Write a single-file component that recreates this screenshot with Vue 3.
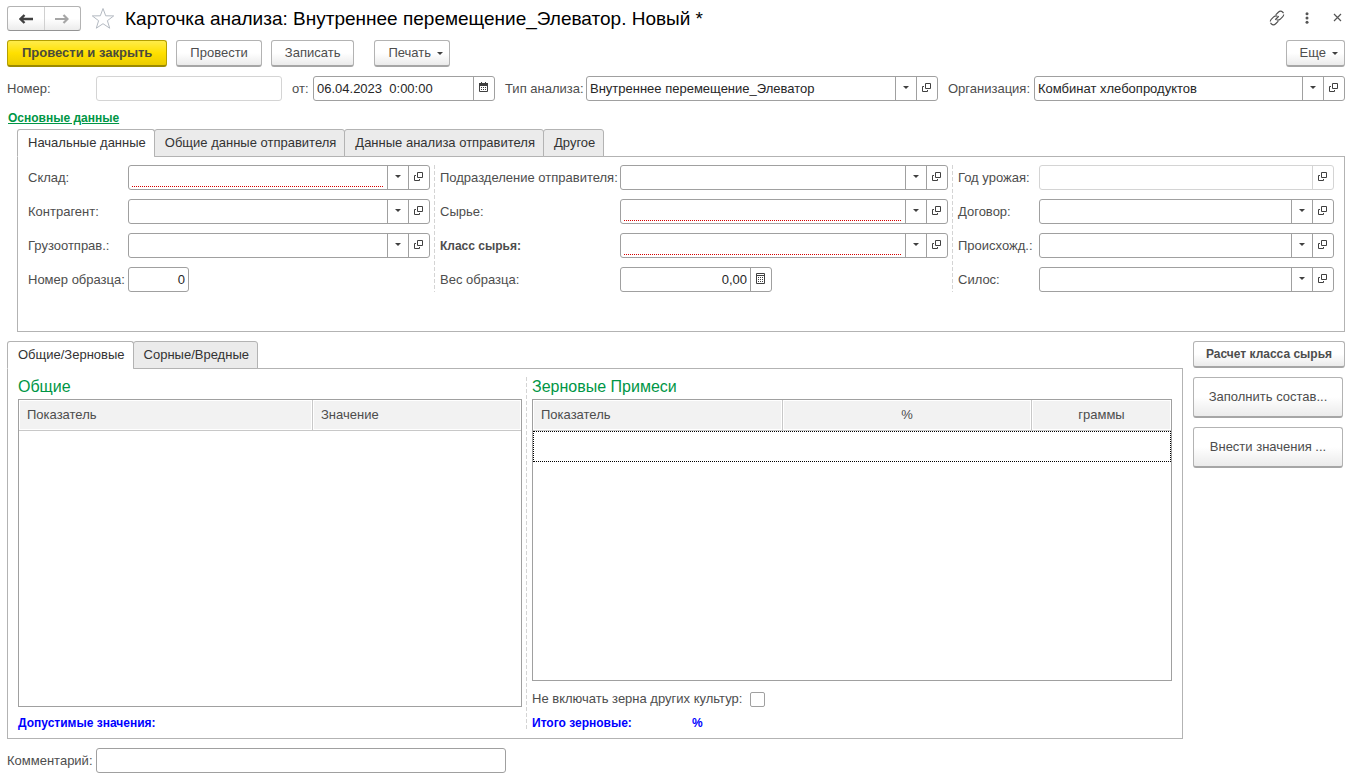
<script setup>
import { ref } from 'vue'

const topTabs = ['Начальные данные', 'Общие данные отправителя', 'Данные анализа отправителя', 'Другое']
const bottomTabs = ['Общие/Зерновые', 'Сорные/Вредные']
const topTab = ref(0)
const bottomTab = ref(0)

const header = ref([
  { id: 'number', label: 'Номер:', value: '', disabled: true, buttons: [] },
  { id: 'date', label: 'от:', value: '06.04.2023  0:00:00', buttons: ['calendar'] },
  { id: 'kind', label: 'Тип анализа:', value: 'Внутреннее перемещение_Элеватор', buttons: ['drop', 'open'] },
  { id: 'org', label: 'Организация:', value: 'Комбинат хлебопродуктов', buttons: ['drop', 'open'] }
])

const columns = ref([
  [
    { id: 'store', label: 'Склад:', value: '', required: true, buttons: ['drop', 'open'] },
    { id: 'partner', label: 'Контрагент:', value: '', buttons: ['drop', 'open'] },
    { id: 'shipper', label: 'Грузоотправ.:', value: '', buttons: ['drop', 'open'] },
    { id: 'sample', label: 'Номер образца:', value: '0', size: 'short', buttons: [] }
  ],
  [
    { id: 'unit', label: 'Подразделение отправителя:', value: '', buttons: ['drop', 'open'] },
    { id: 'raw', label: 'Сырье:', value: '', required: true, buttons: ['drop', 'open'] },
    { id: 'grade', label: 'Класс сырья:', value: '', bold: true, required: true, buttons: ['drop', 'open'] },
    { id: 'weight', label: 'Вес образца:', value: '0,00', size: 'medium', buttons: ['calc'] }
  ],
  [
    { id: 'year', label: 'Год урожая:', value: '', disabled: true, buttons: ['open'] },
    { id: 'contract', label: 'Договор:', value: '', buttons: ['drop', 'open'] },
    { id: 'origin', label: 'Происхожд.:', value: '', buttons: ['drop', 'open'] },
    { id: 'silo', label: 'Силос:', value: '', buttons: ['drop', 'open'] }
  ]
])

const buttonNames = { drop: 'Выбрать из списка', open: 'Открыть', calendar: 'Календарь', calc: 'Калькулятор' }
const excludeOther = ref(false)
const comment = ref('')
</script>

<template>
  <main class="page">
    <header class="titlebar">
      <div class="history">
        <button type="button" aria-label="Назад">
          <svg width="14" height="10" viewBox="0 0 14 10"><path d="M5.500 1 1.500 5l4 4M2 5h12" fill="none" stroke="#404040" stroke-width="2.400" /></svg>
        </button>
        <button type="button" aria-label="Вперед">
          <svg width="14" height="10" viewBox="0 0 14 10"><path d="m8.500 1 4 4-4 4M12 5H0" fill="none" stroke="#a6a6a6" stroke-width="2.200" /></svg>
        </button>
      </div>
      <button type="button" class="plain star" aria-label="В избранное">
        <svg width="24" height="23" viewBox="0 0 24 23"><path d="m12 1.500 2.700 7.300 8 .1-6.300 4.800 2.300 7.500-6.700-4.500-6.700 4.500 2.300-7.500L1.300 8.900l8-.1z" fill="#fff" stroke="#b4bac2" /></svg>
      </button>
      <h1>Карточка анализа: Внутреннее перемещение_Элеватор. Новый *</h1>
      <button type="button" class="plain tool" aria-label="Ссылка">
        <svg width="16" height="16" viewBox="0 0 18 18"><path d="m7.500 5.500 3-3a3.500 3.500 0 0 1 5 5l-3 3q-2 1.500-4 .5M10.500 12.500l-3 3a3.500 3.500 0 0 1-5-5l3-3q2-1.500 4-.5M7 11l4-4" fill="none" stroke="#505050" stroke-width="1.300" stroke-dasharray="11 1.500" /></svg>
      </button>
      <button type="button" class="plain tool" aria-label="Дополнительно">
        <svg width="4" height="12" viewBox="0 0 4 12" fill="#555"><circle cx="2" cy="1.700" r="1.500" /><circle cx="2" cy="6" r="1.500" /><circle cx="2" cy="10.300" r="1.500" /></svg>
      </button>
      <button type="button" class="plain tool" aria-label="Закрыть">
        <svg width="9" height="9" viewBox="0 0 9 9"><path d="m1 1 7 7M8 1 1 8" fill="none" stroke="#555" stroke-width="1.200" /></svg>
      </button>
    </header>

    <div class="commands">
      <button type="button" class="btn primary">Провести и закрыть</button>
      <button type="button" class="btn">Провести</button>
      <button type="button" class="btn">Записать</button>
      <button type="button" class="btn menu print">Печать<span class="caret"></span></button>
      <button type="button" class="btn menu more">Еще<span class="caret"></span></button>
    </div>

    <div class="requisites">
      <template v-for="f in header" :key="f.id">
        <label :for="f.id">{{ f.label }}</label>
        <div class="field" :class="{ disabled: f.disabled }">
          <input :id="f.id" v-model="f.value" type="text" :disabled="f.disabled">
          <button v-for="b in f.buttons" :key="b" type="button" :aria-label="buttonNames[b]">
            <span v-if="b === 'drop'" class="caret"></span>
            <svg v-else-if="b === 'open'" width="10" height="10" viewBox="0 0 10 10"><path d="M3.500.5h5v5h-5zM2 3.500H.5v5h5V7" fill="none" stroke="#404040" /></svg>
            <svg v-else width="10" height="11" viewBox="0 0 10 11"><path d="M.5 2.500h8v7h-8z" fill="#fff" stroke="#404040" /><path d="M0 1h9v3H0zM2 0h1v2H2zM6 0h1v2H6zM2 5h1v1H2zM4 5h1v1H4zM6 5h1v1H6zM2 7h1v1H2zM4 7h1v1H4zM6 7h1v1H6z" fill="#404040" /></svg>
          </button>
        </div>
      </template>
    </div>

    <a href="#main" class="section-link">Основные данные</a>

    <section id="main" class="upper">
      <div class="tabs" role="tablist">
        <button v-for="(t, i) in topTabs" :key="t" type="button" role="tab" :aria-selected="topTab === i" :class="{ active: topTab === i }" @click="topTab = i">{{ t }}</button>
      </div>
      <div class="panel initial">
        <div v-for="(col, c) in columns" :key="c" class="column" :class="'column-' + c">
          <template v-for="f in col" :key="f.id">
            <label :for="f.id" :class="{ strong: f.bold }">{{ f.label }}</label>
            <div class="field" :class="[f.size, { disabled: f.disabled, required: f.required }]">
              <input :id="f.id" v-model="f.value" type="text" :disabled="f.disabled">
              <button v-for="b in f.buttons" :key="b" type="button" :aria-label="buttonNames[b]">
                <span v-if="b === 'drop'" class="caret"></span>
                <svg v-else-if="b === 'open'" width="10" height="10" viewBox="0 0 10 10"><path d="M3.500.5h5v5h-5zM2 3.500H.5v5h5V7" fill="none" stroke="#404040" /></svg>
                <svg v-else width="10" height="11" viewBox="0 0 10 11"><path d="M.5.5h8v10h-8zM0 2.500h9" fill="none" stroke="#404040" /><path d="M2 4h1v1H2zM4 4h1v1H4zM6 4h1v1H6zM2 6h1v1H2zM4 6h1v1H4zM6 6h1v1H6zM2 8h1v1H2zM4 8h1v1H4zM6 8h1v1H6z" fill="#404040" /></svg>
              </button>
            </div>
          </template>
        </div>
      </div>
    </section>

    <div class="lower">
      <section class="results">
        <div class="tabs" role="tablist">
          <button v-for="(t, i) in bottomTabs" :key="t" type="button" role="tab" :aria-selected="bottomTab === i" :class="{ active: bottomTab === i }" @click="bottomTab = i">{{ t }}</button>
        </div>
        <div class="panel grids">
          <div class="general">
            <h2>Общие</h2>
            <div class="table-box">
              <table>
                <colgroup><col class="w-name"><col></colgroup>
                <thead><tr><th>Показатель</th><th>Значение</th></tr></thead>
              </table>
            </div>
            <p class="total">Допустимые значения:</p>
          </div>
          <div class="grain">
            <h2>Зерновые Примеси</h2>
            <div class="table-box">
              <table>
                <colgroup><col class="w-grain"><col class="w-percent"><col></colgroup>
                <thead><tr><th>Показатель</th><th class="mid">%</th><th class="mid">граммы</th></tr></thead>
                <tbody><tr class="current"><td></td><td></td><td></td></tr></tbody>
              </table>
            </div>
            <div class="check">
              <label for="exclude">Не включать зерна других культур:</label>
              <input id="exclude" v-model="excludeOther" type="checkbox">
            </div>
            <p class="total"><span class="total-name">Итого зерновые:</span><span>%</span></p>
          </div>
        </div>
      </section>
      <aside class="actions">
        <button type="button" class="btn small">Расчет класса сырья</button>
        <button type="button" class="btn tall">Заполнить состав...</button>
        <button type="button" class="btn tall">Внести значения ...</button>
      </aside>
    </div>

    <div class="comment">
      <label for="comment">Комментарий:</label>
      <div class="field"><input id="comment" v-model="comment" type="text"></div>
    </div>
  </main>
</template>

<style>
body {
  margin: 0;
  background: #fff;
}
</style>

<style scoped>
* {
  box-sizing: border-box;
}
.page {
  display: flex;
  flex-direction: column;
  min-height: 100vh;
  padding: 6px 10px 6px 7px;
  color: #4d4d4d;
  font-family: "Liberation Sans", Arial, sans-serif;
  font-size: 13px;
  line-height: 16px;
}
button,
input {
  margin: 0;
  font: inherit;
  color: inherit;
}
button {
  padding: 0;
  border: 0;
  background: none;
}
h1,
h2,
p {
  margin: 0;
}
svg {
  display: block;
}

.titlebar {
  display: flex;
  align-items: center;
  height: 25px;
}
.history {
  display: flex;
  width: 74px;
  height: 25px;
  border: 1px solid #b3b3b3;
  border-bottom-color: #949494;
  border-radius: 3px;
  background: linear-gradient(#fff 50%, #ececec);
}
.history button {
  display: flex;
  flex: 1;
  align-items: center;
  justify-content: center;
}
.history button + button {
  border-left: 1px solid #d0d0d0;
}
.star {
  margin: 0 10px;
}
h1 {
  flex: 1;
  color: #000;
  font-size: 19px;
  font-weight: normal;
  line-height: 24px;
  white-space: nowrap;
}
.plain {
  display: flex;
  align-items: center;
  justify-content: center;
}
.tool {
  width: 30px;
  height: 25px;
  padding-bottom: 2px;
}
.tool:last-child {
  width: 16px;
  margin: 0 0 0 7px;
}

.commands {
  display: flex;
  margin-top: 9px;
  gap: 9px;
}
.btn {
  height: 27px;
  padding: 0 13px;
  border: 1px solid #b3b3b3;
  border-bottom: 2px solid #a6a6a6;
  border-radius: 3px;
  background: linear-gradient(#fff 50%, #ebebeb);
  color: #4d4d4d;
  white-space: nowrap;
}
.primary {
  padding: 0 14px;
  border-color: #b5a000;
  border-bottom-color: #9c8a00;
  background: linear-gradient(#ffec4a, #ffe000 50%, #ebcc00);
  color: #4a4a3c;
  font-weight: bold;
}
.menu {
  display: flex;
  align-items: center;
  gap: 6px;
  padding-right: 6px;
}
.print {
  margin-left: 11px;
}
.more {
  margin-left: auto;
}
.caret {
  width: 0;
  border: 3px solid transparent;
  border-top-color: #404040;
  border-bottom: 0;
}

.requisites {
  display: grid;
  grid-template-columns: 89px 186px 31px 182px 91px minmax(0, 352fr) 96px minmax(0, 311fr);
  align-items: center;
  margin-top: 9px;
}
.requisites label {
  padding-left: 10px;
}
.requisites label:first-child {
  padding-left: 0;
}
label {
  white-space: nowrap;
}
.field {
  display: flex;
  height: 25px;
  overflow: hidden;
  border: 1px solid #a0a0a0;
  border-radius: 3px;
  background: #fff;
}
.field input {
  flex: 1;
  min-width: 0;
  padding: 0 3px;
  border: 0;
  outline: 0;
  background: none;
  color: #262626;
}
.field button {
  display: flex;
  flex: none;
  align-items: center;
  justify-content: center;
  width: 21px;
  padding-bottom: 2px;
  border-left: 1px solid #a0a0a0;
}
.field.disabled,
.field.disabled button {
  border-color: #d4d4d4;
}
.field.required input {
  background-image: linear-gradient(90deg, #d40000 50%, #ffffff 50%);
  background-repeat: repeat-x;
  background-position: 0 20px;
  background-size: 2px 1px;
  background-origin: content-box;
  background-clip: content-box;
}
.short {
  width: 61px;
}
.medium {
  width: 152px;
}
.short input,
.medium input {
  text-align: right;
}

.section-link {
  align-self: flex-start;
  margin: 9px 0 3px 1px;
  color: #009646;
  font-size: 12px;
  font-weight: bold;
}

.upper {
  padding-left: 10px;
}
.tabs {
  position: relative;
  display: flex;
  margin-bottom: -1px;
}
.tabs button {
  height: 28px;
  margin-right: -1px;
  padding: 0 8px 0 10px;
  border: 1px solid #b3b3b3;
  border-radius: 3px 3px 0 0;
  background: #ebebeb;
  color: #333;
  white-space: nowrap;
}
.tabs button.active {
  border-bottom-color: #fff;
  background: #fff;
}
.panel {
  border: 1px solid #b3b3b3;
}
.initial {
  display: grid;
  grid-template-columns: minmax(0, 402fr) minmax(0, 514fr) minmax(0, 382fr);
  align-items: start;
  gap: 4px;
  min-height: 176px;
  padding: 8px 10px;
}
.column {
  display: grid;
  grid-template-columns: 100px minmax(0, 1fr);
  align-items: center;
  row-gap: 9px;
}
.column-1,
.column-2,
.grain {
  padding-left: 6px;
  background: repeating-linear-gradient(#d4d4d4 0 4px, #fff 4px 6px) 0 0 / 1px 100% no-repeat;
}
.column-1 {
  grid-template-columns: 180px minmax(0, 1fr);
}
.column-2 {
  grid-template-columns: 81px minmax(0, 1fr);
}
.strong {
  font-size: 12px;
  font-weight: bold;
}

.lower {
  display: flex;
  flex: 1;
  gap: 10px;
  margin-top: 9px;
}
.results {
  display: flex;
  flex: 1;
  flex-direction: column;
}
.grids {
  display: grid;
  flex: 1;
  grid-template-columns: minmax(0, 504fr) minmax(0, 646fr);
  gap: 4px;
  padding: 8px 10px 7px;
}
.general,
.grain {
  display: flex;
  flex-direction: column;
}
h2 {
  height: 22px;
  color: #009646;
  font-size: 16px;
  font-weight: normal;
  line-height: 20px;
}
.table-box {
  flex: 1;
  border: 1px solid #a0a0a0;
}
table {
  width: 100%;
  border-collapse: separate;
  border-spacing: 0;
  table-layout: fixed;
}
th {
  height: 31px;
  padding: 0 8px;
  border-right: 1px solid #c8c8c8;
  border-bottom: 1px solid #c8c8c8;
  background: #f2f2f2;
  box-shadow: inset 0 0 0 1px #fff;
  font-weight: normal;
  text-align: left;
}
th:last-child {
  border-right: 0;
}
.mid {
  text-align: center;
}
.w-name {
  width: 294px;
}
.w-grain {
  width: 250px;
}
.w-percent {
  width: 249px;
}
td {
  height: 31px;
  padding: 0;
}
.current {
  outline: 1px dotted #000;
  outline-offset: -1px;
}
.check {
  display: flex;
  align-items: center;
  gap: 8px;
  height: 16px;
  margin-top: 10px;
}
.check input {
  width: 15px;
  height: 15px;
  border: 1px solid #a0a0a0;
  border-radius: 2px;
  appearance: none;
}
.check input:checked {
  background: #a0a0a0;
}
.total {
  display: flex;
  margin-top: 8px;
  color: #00f;
  font-size: 12px;
  font-weight: bold;
}
.total-name {
  width: 160px;
}
.actions {
  display: flex;
  flex: none;
  flex-direction: column;
  align-items: flex-start;
  gap: 9px;
  width: 152px;
}
.small {
  width: 152px;
  padding: 0;
  font-size: 12px;
  font-weight: bold;
}
.tall {
  width: 150px;
  height: 41px;
  padding: 0;
}

.comment {
  display: grid;
  grid-template-columns: 89px 410px;
  align-items: center;
  margin-top: 9px;
}
</style>
